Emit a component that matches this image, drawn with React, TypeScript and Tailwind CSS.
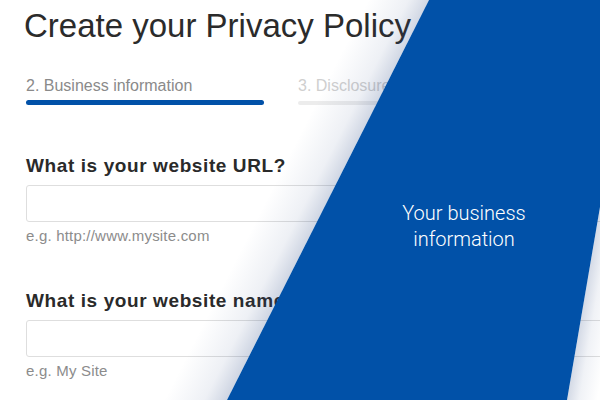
const steps = [
  { label: "2. Business information", active: true },
  { label: "3. Disclosures", active: false },
];

const fields = [
  { question: "What is your website URL?", hint: "e.g. http://www.mysite.com" },
  { question: "What is your website name?", hint: "e.g. My Site" },
];

const Banner = () => (
  <svg
    className="absolute inset-0"
    width={600}
    height={400}
    viewBox="0 0 600 400"
  >
    <defs>
      <linearGradient
        id="leftShade"
        gradientUnits="userSpaceOnUse"
        x1={328}
        y1={200}
        x2={279}
        y2={175}
      >
        <stop offset="0" stopColor="#284682" stopOpacity="0.22" />
        <stop offset="0.35" stopColor="#284682" stopOpacity="0.08" />
        <stop offset="1" stopColor="#284682" stopOpacity="0" />
      </linearGradient>
      <linearGradient
        id="rightShade"
        gradientUnits="userSpaceOnUse"
        x1={583.5}
        y1={303.5}
        x2={613}
        y2={308.5}
      >
        <stop offset="0" stopColor="#284682" stopOpacity="0.2" />
        <stop offset="0.4" stopColor="#284682" stopOpacity="0.07" />
        <stop offset="1" stopColor="#284682" stopOpacity="0" />
      </linearGradient>
    </defs>
    <polygon points="429,0 227,400 149,400 351,0" fill="url(#leftShade)" />
    <polygon points="600,207 567,400 620,400 620,207" fill="url(#rightShade)" />
    <polygon points="429,0 600,0 600,207 567,400 227,400" fill="#0151a8" />
  </svg>
);

export default function App() {
  return (
    <div className="relative w-[600px] h-[400px] overflow-hidden bg-white font-['Liberation_Sans',Arial,sans-serif]">
      <h1 className="pt-2 pl-[24px] text-[33px] leading-[36px] text-[#2b2b2b] whitespace-nowrap">
        Create your Privacy Policy
      </h1>

      <div className="mt-[32px] pl-[26px] flex gap-[34px]">
        {steps.map((s) => (
          <div key={s.label} className="w-[238px] shrink-0">
            <div
              className={
                s.active
                  ? "text-[16px] leading-5 text-[#8a8a8a] whitespace-nowrap"
                  : "text-[16px] leading-5 text-[#cfcfcf] whitespace-nowrap"
              }
            >
              {s.label}
            </div>
            {s.active ? (
              <div className="mt-1 h-[5px] rounded-full bg-[#0151a8]" />
            ) : (
              <div className="mt-[5px] h-1 rounded-full bg-[#ececec]" />
            )}
          </div>
        ))}
      </div>

      <div className="pl-[26px] mt-[49px] flex flex-col gap-[44px]">
        {fields.map((f) => (
          <div key={f.question} className="flex flex-col">
            <label className="text-[19px] leading-6 font-bold tracking-[0.6px] text-[#2a2a2a] whitespace-nowrap">
              {f.question}
            </label>
            <div className="mt-[7px] w-[640px] h-[37px] rounded-[3px] border border-[#dedede] bg-white" />
            <div className="mt-[5px] text-[15px] leading-[18px] tracking-[0.2px] text-[#8c8c8c]">
              {f.hint}
            </div>
          </div>
        ))}
      </div>

      <Banner />

      <div className="absolute left-[364px] top-[200px] w-[200px] text-center text-[20px] leading-[26px] font-light text-white font-['Roboto',sans-serif]">
        Your business
        <br />
        information
      </div>
    </div>
  );
}
